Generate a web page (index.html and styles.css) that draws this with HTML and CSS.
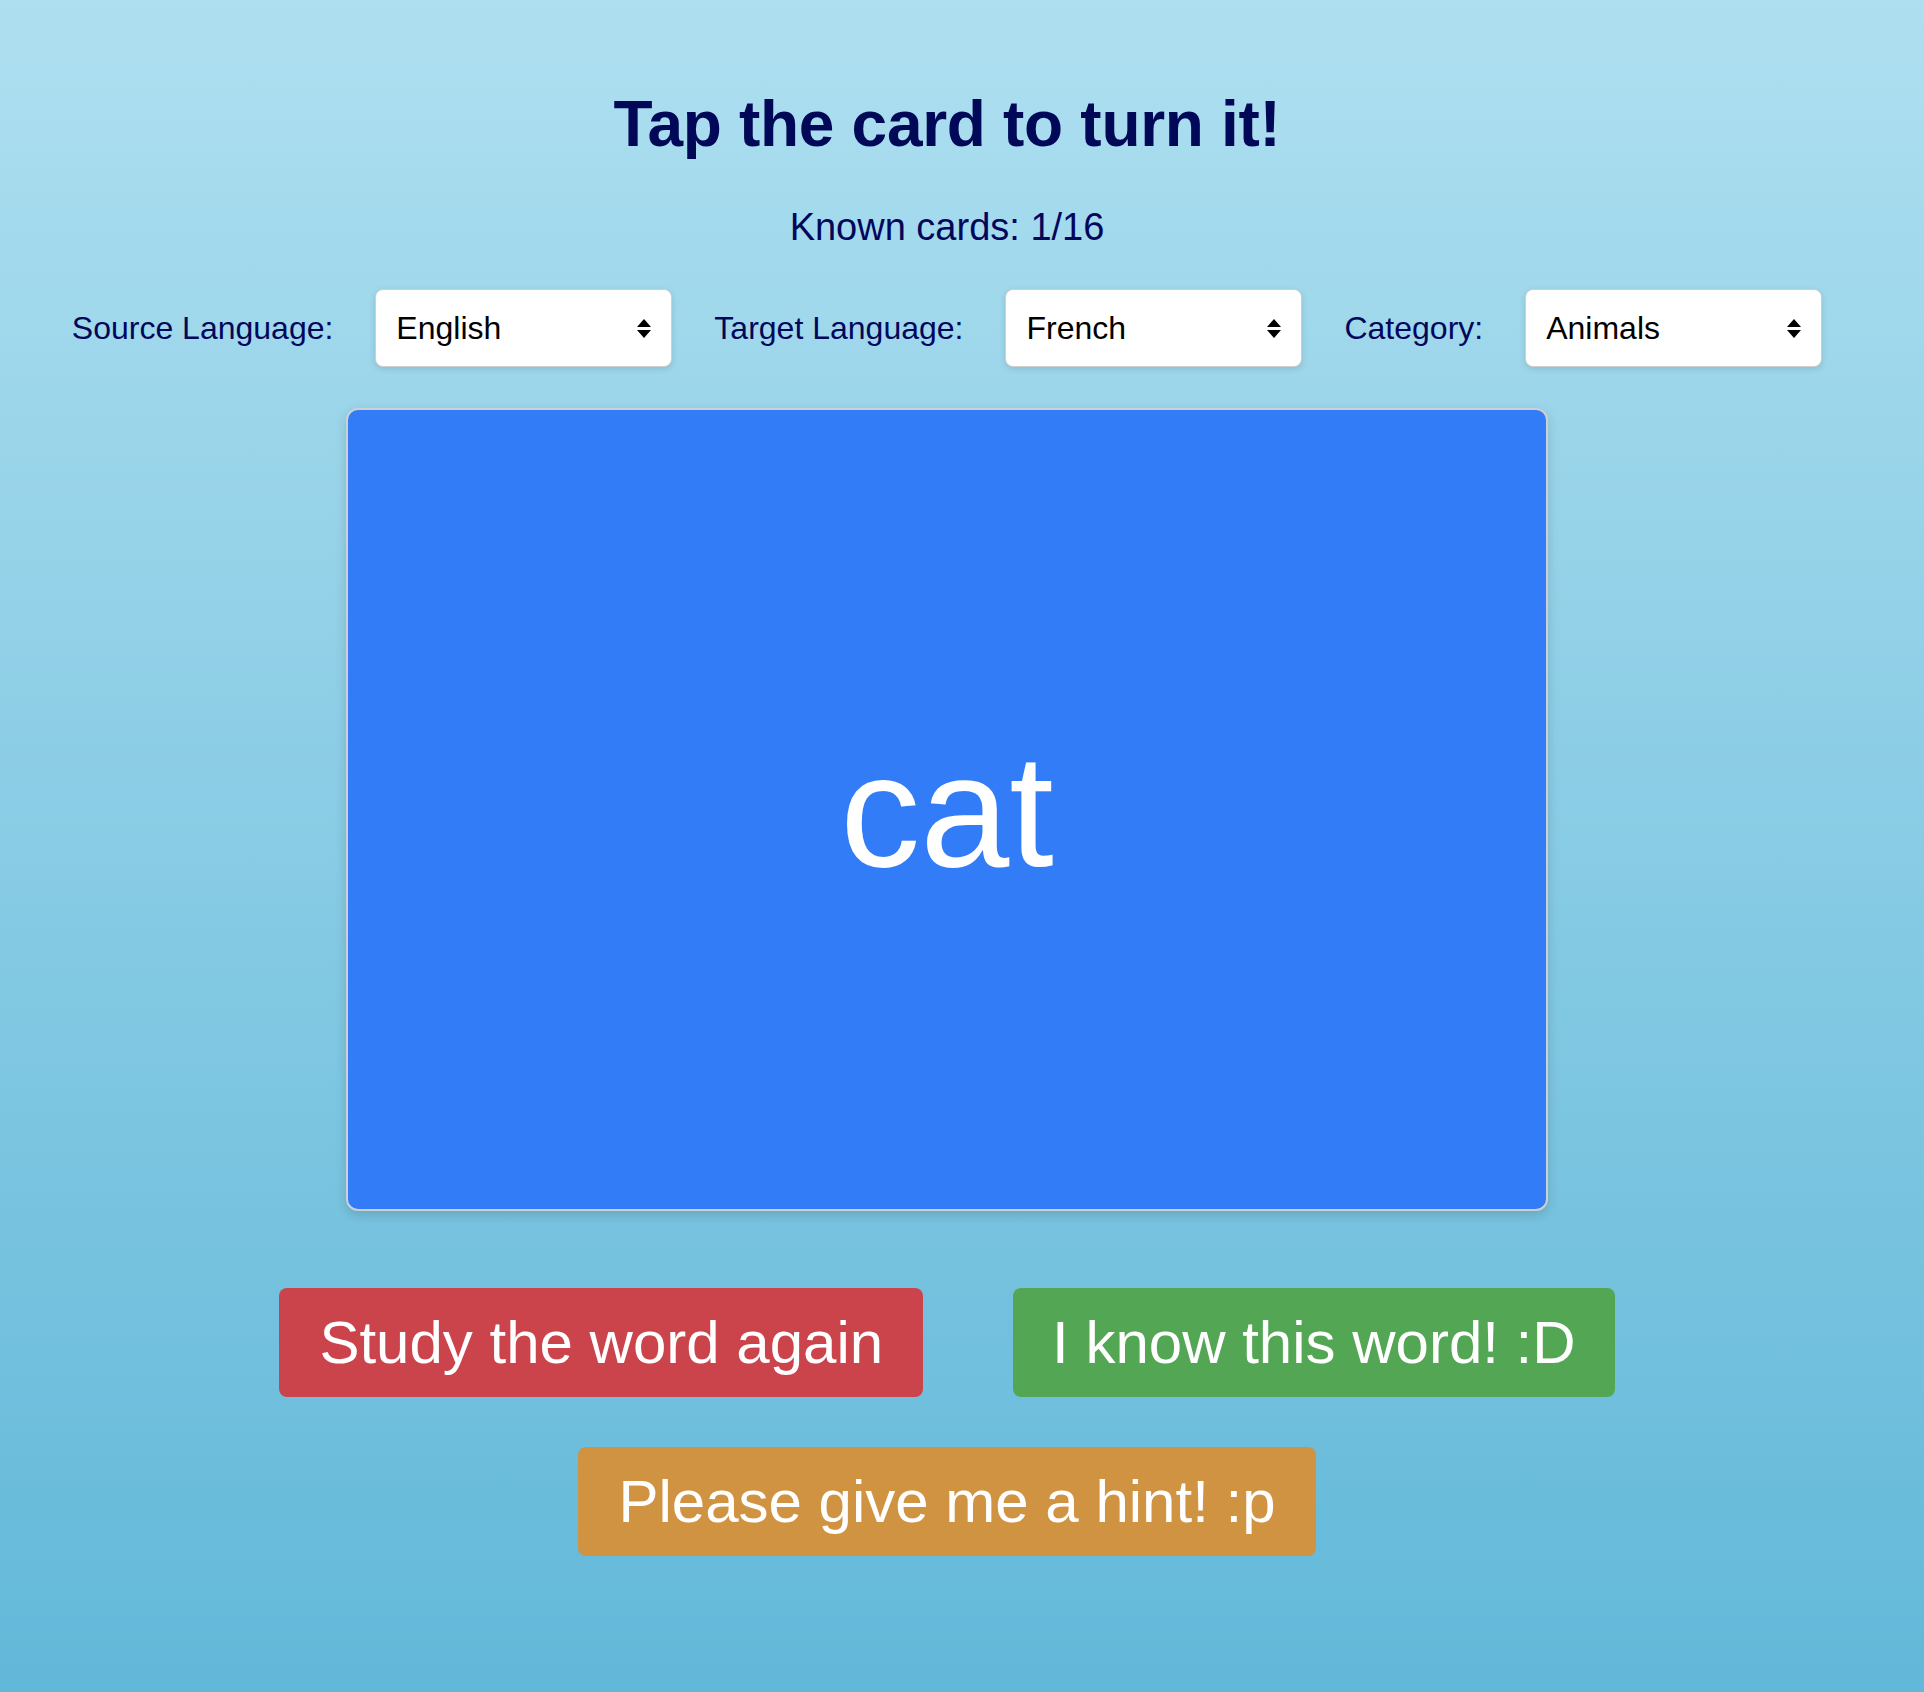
FILE: index.html
```html
<!DOCTYPE html>
<html lang="en">
<head>
<meta charset="utf-8">
<title>Flashcards</title>
<link rel="stylesheet" href="styles.css">
</head>
<body>
<main class="app">
  <h1 class="title">Tap the card to turn it!</h1>
  <p class="known">Known cards: 1/16</p>
  <div class="controls">
    <label class="label">Source Language:</label>
    <div class="select"><span>English</span><svg class="arrows" width="14" height="19" viewBox="0 0 14 19"><path d="M7 0L14 8H0Z"/><path d="M0 11H14L7 19Z"/></svg></div>
    <label class="label">Target Language:</label>
    <div class="select"><span>French</span><svg class="arrows" width="14" height="19" viewBox="0 0 14 19"><path d="M7 0L14 8H0Z"/><path d="M0 11H14L7 19Z"/></svg></div>
    <label class="label">Category:</label>
    <div class="select"><span>Animals</span><svg class="arrows" width="14" height="19" viewBox="0 0 14 19"><path d="M7 0L14 8H0Z"/><path d="M0 11H14L7 19Z"/></svg></div>
  </div>
  <div class="card"><span class="word">cat</span></div>
  <div class="buttons">
    <div class="row">
      <button class="btn btn-red">Study the word again</button>
      <button class="btn btn-green">I know this word! :D</button>
    </div>
    <div class="row">
      <button class="btn btn-orange">Please give me a hint! :p</button>
    </div>
  </div>
</main>
</body>
</html>
```
FILE: styles.css
```css
html, body {
  margin: 0;
  padding: 0;
}
body {
  min-height: 1692px;
  background: linear-gradient(to bottom, #aedff0 0%, #62b8d9 100%);
  font-family: "Liberation Sans", Arial, Helvetica, sans-serif;
  color: #03075c;
}
.app {
  width: 1894px;
  display: flex;
  flex-direction: column;
  align-items: center;
}
.title {
  margin: 88px 0 0;
  font-size: 64px;
  font-weight: bold;
  line-height: 72px;
  color: #020858;
  letter-spacing: -0.3px;
}
.known {
  margin: 46px 0 0;
  font-size: 38px;
  line-height: 42px;
}
.controls {
  margin-top: 41px;
  display: flex;
  align-items: center;
  gap: 42px;
}
.label {
  font-size: 32px;
  line-height: 78px;
  color: #03075c;
}
.select {
  box-sizing: border-box;
  width: 297px;
  height: 78px;
  background: #fff;
  border: 1px solid #cfcfcf;
  border-radius: 8px;
  box-shadow: 0 2px 6px rgba(0, 0, 0, 0.12);
  display: flex;
  align-items: center;
  justify-content: space-between;
  padding: 0 20px 0 20px;
  font-size: 32px;
  color: #000;
}
.arrows {
  fill: #000;
}
.card {
  margin-top: 41px;
  box-sizing: border-box;
  width: 1202px;
  height: 803px;
  background: #327df7;
  border: 2px solid #cdd0d4;
  border-radius: 12px;
  box-shadow: 0 4px 12px rgba(0, 0, 0, 0.15);
  display: flex;
  align-items: center;
  justify-content: center;
}
.word {
  color: #fff;
  font-size: 160px;
  position: relative;
  top: 1px;
}
.buttons {
  margin-top: 77px;
  display: flex;
  flex-direction: column;
  align-items: center;
  gap: 50px;
}
.row {
  display: flex;
  gap: 90px;
}
.btn {
  border: none;
  border-radius: 8px;
  color: #fff;
  font-family: "Liberation Sans", Arial, Helvetica, sans-serif;
  font-size: 60px;
  line-height: 69px;
  padding: 20px 40px;
  cursor: pointer;
}
.btn-red {
  background: #cb444b;
}
.btn-green {
  background: #53a653;
  padding: 20px 39px;
}
.btn-orange {
  background: #d09342;
}
```
